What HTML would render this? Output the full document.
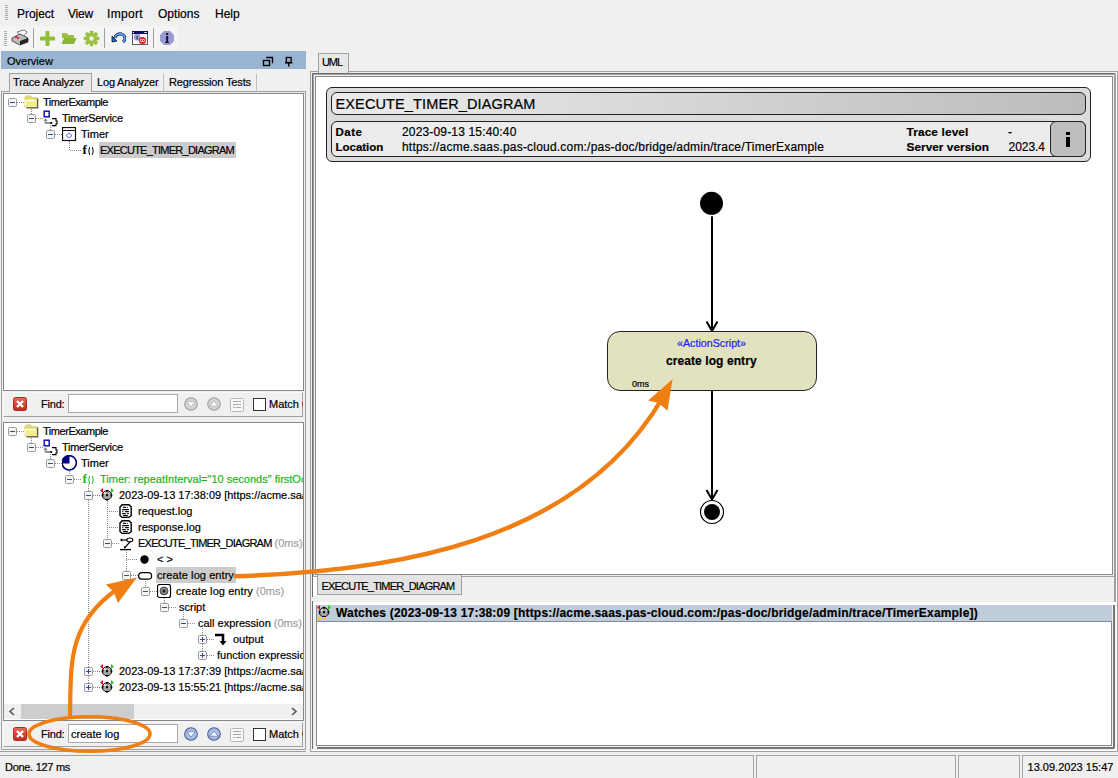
<!DOCTYPE html>
<html><head><meta charset="utf-8"><style>
html,body{margin:0;padding:0;}
body{width:1118px;height:778px;overflow:hidden;position:relative;background:#f0f0f0;font-family:"Liberation Sans",sans-serif;}
body div{position:absolute;box-sizing:border-box;}
.t{white-space:nowrap;-webkit-text-stroke:0.2px currentColor;}
#L{position:absolute;left:0;top:0;width:1118px;height:778px;}
#clipL{position:absolute;left:0;top:0;width:303px;height:778px;overflow:hidden;}
</style></head><body>
<div style="left:0px;top:0px;width:1118px;height:26px;background:#f0f0f0"></div><div style="left:5px;top:5px;width:3px;height:1px;background:#a8a8a8"></div><div style="left:5px;top:7px;width:3px;height:1px;background:#a8a8a8"></div><div style="left:5px;top:9px;width:3px;height:1px;background:#a8a8a8"></div><div style="left:5px;top:11px;width:3px;height:1px;background:#a8a8a8"></div><div style="left:5px;top:13px;width:3px;height:1px;background:#a8a8a8"></div><div style="left:5px;top:15px;width:3px;height:1px;background:#a8a8a8"></div><div style="left:5px;top:17px;width:3px;height:1px;background:#a8a8a8"></div><div style="left:5px;top:19px;width:3px;height:1px;background:#a8a8a8"></div><div class="t" style="left:17px;top:7.84px;font-size:12px;line-height:12px;color:#000;letter-spacing:-0.049px;">Project</div><div class="t" style="left:68px;top:7.84px;font-size:12px;line-height:12px;color:#000;letter-spacing:-0.199px;">View</div><div class="t" style="left:107px;top:7.84px;font-size:12px;line-height:12px;color:#000;letter-spacing:0.333px;">Import</div><div class="t" style="left:158px;top:7.84px;font-size:12px;line-height:12px;color:#000;letter-spacing:0.022px;">Options</div><div class="t" style="left:215px;top:7.84px;font-size:12px;line-height:12px;color:#000;letter-spacing:-0.022px;">Help</div><div style="left:0px;top:26px;width:178px;height:24px;background:#f4f4f4"></div><div style="left:4px;top:31px;width:3px;height:1px;background:#a8a8a8"></div><div style="left:4px;top:33px;width:3px;height:1px;background:#a8a8a8"></div><div style="left:4px;top:35px;width:3px;height:1px;background:#a8a8a8"></div><div style="left:4px;top:37px;width:3px;height:1px;background:#a8a8a8"></div><div style="left:4px;top:39px;width:3px;height:1px;background:#a8a8a8"></div><div style="left:4px;top:41px;width:3px;height:1px;background:#a8a8a8"></div><div style="left:4px;top:43px;width:3px;height:1px;background:#a8a8a8"></div><div style="left:4px;top:45px;width:3px;height:1px;background:#a8a8a8"></div><div style="left:33px;top:28px;width:1px;height:20px;background:#a0a0a0"></div><div style="left:104px;top:28px;width:1px;height:20px;background:#a0a0a0"></div><div style="left:153px;top:28px;width:1px;height:20px;background:#a0a0a0"></div><svg style="position:absolute;left:11px;top:29px" width="18" height="17" viewBox="0 0 18 17"><path d="M6 3 L13 1 L16 3 L12 8 Z" fill="#fff" stroke="#777" stroke-width="1"/><path d="M1 9 L9 5 L17 9 L17 13 L9 16 L1 12 Z" fill="#bbb" stroke="#555" stroke-width="1"/><path d="M9 12 L17 9 L17 13 L9 16 Z" fill="#222"/><circle cx="5" cy="8" r="1" fill="#e00"/><circle cx="7" cy="9" r="1" fill="#e00"/></svg><svg style="position:absolute;left:40px;top:31px" width="15" height="15" viewBox="0 0 15 15"><path d="M7.5 1.5 V13.5 M1.5 7.5 H13.5" stroke="#8fbf3a" stroke-width="4" stroke-linecap="round"/></svg><svg style="position:absolute;left:61px;top:32px" width="16" height="13" viewBox="0 0 16 13"><path d="M1 1 H6 L7 3 H13 V6 H1 Z" fill="#9cc043"/><path d="M3 6 H15.5 L13 12 H0.5 Z" fill="#8ab53a"/></svg><svg style="position:absolute;left:83px;top:30px" width="17" height="17" viewBox="0 0 17 17"><g transform="translate(8.5 8.5)"><rect x="-1.8" y="-7.8" width="3.6" height="4" rx="0.8" fill="#9bc23f" transform="rotate(0)"/><rect x="-1.8" y="-7.8" width="3.6" height="4" rx="0.8" fill="#9bc23f" transform="rotate(45)"/><rect x="-1.8" y="-7.8" width="3.6" height="4" rx="0.8" fill="#9bc23f" transform="rotate(90)"/><rect x="-1.8" y="-7.8" width="3.6" height="4" rx="0.8" fill="#9bc23f" transform="rotate(135)"/><rect x="-1.8" y="-7.8" width="3.6" height="4" rx="0.8" fill="#9bc23f" transform="rotate(180)"/><rect x="-1.8" y="-7.8" width="3.6" height="4" rx="0.8" fill="#9bc23f" transform="rotate(225)"/><rect x="-1.8" y="-7.8" width="3.6" height="4" rx="0.8" fill="#9bc23f" transform="rotate(270)"/><rect x="-1.8" y="-7.8" width="3.6" height="4" rx="0.8" fill="#9bc23f" transform="rotate(315)"/><circle r="5.6" fill="#9bc23f"/><circle r="2.2" fill="#f4f4f4"/></g></svg><svg style="position:absolute;left:111px;top:32px" width="15" height="12" viewBox="0 0 15 12"><path d="M4 6 A5 4.5 0 1 1 12 10" fill="none" stroke="#1a1a6a" stroke-width="3"/><path d="M4 6 A5 4.5 0 1 1 12 10" fill="none" stroke="#5ab0f0" stroke-width="1.5"/><path d="M1 4 L6 9 L1 10 Z" fill="#1a6ad0" stroke="#111" stroke-width="0.8"/></svg><svg style="position:absolute;left:132px;top:31px" width="16" height="14" viewBox="0 0 16 14"><rect x="0.5" y="0.5" width="15" height="13" fill="#fff" stroke="#5a5a5a"/><rect x="0" y="0" width="16" height="3" fill="#0a0a60"/><rect x="1" y="1" width="1" height="1" fill="#fff"/><rect x="12" y="1" width="3" height="1" fill="#ccc"/><circle cx="5.2" cy="6.2" r="3.4" fill="#9aa0d0"/><rect x="4.6" y="5" width="1.3" height="3.5" fill="#333a70"/><circle cx="10.5" cy="9.5" r="3.6" fill="#f01010"/><path d="M8.3 9.5 a1 1 0 1 0 2.2 0 a1 1 0 1 1 2.2 0 a1 1 0 1 1 -2.2 0 a1 1 0 1 0 -2.2 0" fill="none" stroke="#fff" stroke-width="0.9"/></svg><svg style="position:absolute;left:159px;top:30px" width="16" height="16" viewBox="0 0 16 16"><path d="M5 1 H11 L15 5 V11 L11 15 H5 L1 11 V5 Z" fill="#9b9bd0"/><rect x="7" y="6" width="2.2" height="6" fill="#1a1a40"/><rect x="7" y="3" width="2.2" height="2" fill="#1a1a40"/><rect x="6" y="12" width="4" height="1" fill="#1a1a40"/></svg><div style="left:1px;top:51px;width:305px;height:18px;background:#99b4d1"></div><div class="t" style="left:7px;top:55.69px;font-size:11px;line-height:11px;color:#000;">Overview</div><svg style="position:absolute;left:262px;top:56px" width="12" height="12" viewBox="0 0 12 12"><rect x="1.5" y="4.5" width="6" height="5" fill="none" stroke="#000" stroke-width="1.4"/><path d="M4.2 1.5 H10.5 V7.2" fill="none" stroke="#000" stroke-width="1.4"/></svg><svg style="position:absolute;left:284px;top:56px" width="10" height="11" viewBox="0 0 10 11"><rect x="2.3" y="1.5" width="4.8" height="5" fill="none" stroke="#000" stroke-width="1.3"/><path d="M1 6.8 H8.5" stroke="#000" stroke-width="1.4"/><path d="M4.7 7 V10.5" stroke="#000" stroke-width="1.4"/></svg><div style="left:1px;top:91px;width:305px;height:659px;border:1px solid #a0a0a0;background:#f0f0f0"></div><div style="left:9px;top:73px;width:83px;height:19px;background:#e8e8e8;border:1px solid #a0a0a0;border-bottom:none"></div><div class="t" style="left:13px;top:76.69px;font-size:11px;line-height:11px;color:#000;letter-spacing:-0.142px;">Trace Analyzer</div><div class="t" style="left:97px;top:76.69px;font-size:11px;line-height:11px;color:#000;letter-spacing:-0.178px;">Log Analyzer</div><div style="left:163px;top:74px;width:1px;height:17px;background:#c0c0c0"></div><div class="t" style="left:169px;top:76.69px;font-size:11px;line-height:11px;color:#000;letter-spacing:-0.138px;">Regression Tests</div><div style="left:256px;top:74px;width:1px;height:17px;background:#c0c0c0"></div><div style="left:3px;top:93px;width:301px;height:298px;background:#fff;border:1px solid #828790"></div><div style="left:3px;top:392px;width:300px;height:25px;background:#f0f0f0;border:1px solid #a0a0a0;border-top-color:#f8f8f8;border-left-color:#f8f8f8"></div><svg style="position:absolute;left:13px;top:397px" width="14" height="14" viewBox="0 0 14 14"><defs><linearGradient id="rg" x1="0" y1="0" x2="0" y2="1"><stop offset="0" stop-color="#e86a5c"/><stop offset="1" stop-color="#c0281c"/></linearGradient></defs><rect x="0.5" y="0.5" width="13" height="13" rx="2" fill="url(#rg)" stroke="#b52a20"/><path d="M4 4 L10 10 M10 4 L4 10" stroke="#fff" stroke-width="2.4"/></svg><div class="t" style="left:41px;top:398.69px;font-size:11px;line-height:11px;color:#000;letter-spacing:-0.194px;">Find:</div><div style="left:68px;top:394px;width:110px;height:19px;background:#fff;border:1px solid #aaa;box-sizing:border-box"></div><svg style="position:absolute;left:184px;top:397px" width="14" height="14" viewBox="0 0 14 14"><circle cx="7" cy="7" r="6.3" fill="#d4d4d4" stroke="#a0a0a0" stroke-width="1.1"/><path d="M3 4.8 H11 L7 10 Z" fill="#fff" stroke="#a0a0a0" stroke-width="0.6"/></svg><svg style="position:absolute;left:207px;top:397px" width="14" height="14" viewBox="0 0 14 14"><circle cx="7" cy="7" r="6.3" fill="#d4d4d4" stroke="#a0a0a0" stroke-width="1.1"/><path d="M3 9.2 H11 L7 4 Z" fill="#fff" stroke="#a0a0a0" stroke-width="0.6"/></svg><svg style="position:absolute;left:230px;top:398px" width="14" height="14" viewBox="0 0 14 14"><rect x="0.5" y="0.5" width="13" height="13" rx="1" fill="#f8f8f8" stroke="#b8b8b8"/><path d="M3 3.5 H11 M3 6.5 H11 M3 9.5 H5 M6 9.5 H11" stroke="#a8a8a8"/></svg><div style="left:253px;top:398px;width:13px;height:13px;background:#fff;border:1px solid #333;box-sizing:border-box"></div><div class="t" style="left:269px;top:398.69px;font-size:11px;line-height:11px;color:#000;clip-path:inset(0 0 0 0);width:34px;overflow:hidden">Match Case</div><div style="left:3px;top:422px;width:301px;height:299px;background:#fff;border:1px solid #828790"></div><div style="left:3px;top:722px;width:300px;height:25px;background:#f0f0f0;border:1px solid #a0a0a0;border-top-color:#f8f8f8;border-left-color:#f8f8f8"></div><svg style="position:absolute;left:13px;top:727px" width="14" height="14" viewBox="0 0 14 14"><defs><linearGradient id="rg" x1="0" y1="0" x2="0" y2="1"><stop offset="0" stop-color="#e86a5c"/><stop offset="1" stop-color="#c0281c"/></linearGradient></defs><rect x="0.5" y="0.5" width="13" height="13" rx="2" fill="url(#rg)" stroke="#b52a20"/><path d="M4 4 L10 10 M10 4 L4 10" stroke="#fff" stroke-width="2.4"/></svg><div class="t" style="left:41px;top:728.69px;font-size:11px;line-height:11px;color:#000;letter-spacing:-0.194px;">Find:</div><div style="left:68px;top:724px;width:110px;height:19px;background:#fff;border:1px solid #aaa;box-sizing:border-box"></div><div class="t" style="left:71px;top:728.69px;font-size:11px;line-height:11px;color:#000;">create log</div><svg style="position:absolute;left:184px;top:727px" width="14" height="14" viewBox="0 0 14 14"><circle cx="7" cy="7" r="6.3" fill="#aabde6" stroke="#4a5f90" stroke-width="1.1"/><path d="M3 4.8 H11 L7 10 Z" fill="#fff" stroke="#4a5f90" stroke-width="0.6"/></svg><svg style="position:absolute;left:207px;top:727px" width="14" height="14" viewBox="0 0 14 14"><circle cx="7" cy="7" r="6.3" fill="#aabde6" stroke="#4a5f90" stroke-width="1.1"/><path d="M3 9.2 H11 L7 4 Z" fill="#fff" stroke="#4a5f90" stroke-width="0.6"/></svg><svg style="position:absolute;left:230px;top:728px" width="14" height="14" viewBox="0 0 14 14"><rect x="0.5" y="0.5" width="13" height="13" rx="1" fill="#f8f8f8" stroke="#b8b8b8"/><path d="M3 3.5 H11 M3 6.5 H11 M3 9.5 H5 M6 9.5 H11" stroke="#a8a8a8"/></svg><div style="left:253px;top:728px;width:13px;height:13px;background:#fff;border:1px solid #333;box-sizing:border-box"></div><div class="t" style="left:269px;top:728.69px;font-size:11px;line-height:11px;color:#000;clip-path:inset(0 0 0 0);width:34px;overflow:hidden">Match Case</div><div style="left:4px;top:704px;width:299px;height:15px;background:#f0f0f0"></div><div style="left:21px;top:704px;width:113px;height:15px;background:#cdcdcd"></div><svg style="position:absolute;left:8px;top:707px" width="8" height="9" viewBox="0 0 8 9"><path d="M6 1 L2 4.5 L6 8" fill="none" stroke="#555" stroke-width="1.6"/></svg><svg style="position:absolute;left:290px;top:707px" width="8" height="9" viewBox="0 0 8 9"><path d="M2 1 L6 4.5 L2 8" fill="none" stroke="#555" stroke-width="1.6"/></svg><div style="left:0px;top:751px;width:306px;height:1px;background:#a0a0a0"></div><div style="left:0;top:0;width:1118px;height:778px;clip-path:inset(94px 815px 58px 4px)"><div style="left:17px;top:102px;width:7px;height:1px;background:repeating-linear-gradient(90deg,#8a8a8a 0 1px,transparent 1px 2px)"></div><div style="left:31px;top:107px;width:1px;height:11px;background:repeating-linear-gradient(180deg,#8a8a8a 0 1px,transparent 1px 2px)"></div><div style="left:36px;top:118px;width:7px;height:1px;background:repeating-linear-gradient(90deg,#8a8a8a 0 1px,transparent 1px 2px)"></div><div style="left:50px;top:123px;width:1px;height:11px;background:repeating-linear-gradient(180deg,#8a8a8a 0 1px,transparent 1px 2px)"></div><div style="left:55px;top:134px;width:7px;height:1px;background:repeating-linear-gradient(90deg,#8a8a8a 0 1px,transparent 1px 2px)"></div><div style="left:69px;top:139px;width:1px;height:11px;background:repeating-linear-gradient(180deg,#8a8a8a 0 1px,transparent 1px 2px)"></div><div style="left:70px;top:150px;width:11px;height:1px;background:repeating-linear-gradient(90deg,#8a8a8a 0 1px,transparent 1px 2px)"></div><svg style="position:absolute;left:8px;top:98px" width="9" height="9" viewBox="0 0 9 9"><rect x="0.5" y="0.5" width="8" height="8" rx="1" fill="#f4f4f4" stroke="#9a9a9a"/><path d="M2 4.5 H7" stroke="#3050a0"/></svg><svg style="position:absolute;left:24px;top:95px" width="15" height="15" viewBox="0 0 15 15"><path d="M13.6 3.2 V12.8 H2.5" fill="none" stroke="#5a5a50" stroke-width="1.4"/><path d="M0.8 2.6 L2.4 0.8 H6.6 L8.2 2.6 H12.6 V12 H0.8 Z" fill="#e4dc6c" stroke="#c8c050" stroke-width="0.5"/><path d="M0.6 5 H12.4 L12.8 12 H1.4 Z" fill="#f2ec8c"/><path d="M1.2 5.4 H11.6" stroke="#fff" stroke-width="1.3"/><path d="M1.2 5.4 V11" stroke="#fff" stroke-width="1"/></svg><div class="t" style="left:43px;top:96.69px;font-size:11px;line-height:11px;color:#000;letter-spacing:-0.458px;">TimerExample</div><svg style="position:absolute;left:27px;top:114px" width="9" height="9" viewBox="0 0 9 9"><rect x="0.5" y="0.5" width="8" height="8" rx="1" fill="#f4f4f4" stroke="#9a9a9a"/><path d="M2 4.5 H7" stroke="#3050a0"/></svg><svg style="position:absolute;left:43px;top:110px" width="17" height="17" viewBox="0 0 17 17"><rect x="1.2" y="1.2" width="5" height="5.6" fill="none" stroke="#0000c0" stroke-width="1.4"/><path d="M2.5 13.5 V10" stroke="#8a8a8a" stroke-width="1.7"/><path d="M0.2 10.8 L2.5 8.2 L4.8 10.8 Z" fill="#8a8a8a"/><path d="M2.5 13 H8" stroke="#8a8a8a" stroke-width="1.8"/><circle cx="8.3" cy="13" r="1.1" fill="#000"/><path d="M9 8.6 H13 V11 H14 V13.8 H13 V15.6 H9" fill="none" stroke="#000" stroke-width="1.1"/></svg><div class="t" style="left:62px;top:112.69px;font-size:11px;line-height:11px;color:#000;letter-spacing:-0.306px;">TimerService</div><svg style="position:absolute;left:46px;top:130px" width="9" height="9" viewBox="0 0 9 9"><rect x="0.5" y="0.5" width="8" height="8" rx="1" fill="#f4f4f4" stroke="#9a9a9a"/><path d="M2 4.5 H7" stroke="#3050a0"/></svg><svg style="position:absolute;left:62px;top:127px" width="15" height="15" viewBox="0 0 15 15"><rect x="0.5" y="0.5" width="13" height="13" fill="#fff" stroke="#111" stroke-width="1.2"/><path d="M1 3.5 H13" stroke="#111"/><path d="M7 6 L10 8.5 L7 11 L4 8.5 Z" fill="none" stroke="#4a4af0" stroke-width="0.9"/></svg><div class="t" style="left:81px;top:128.69px;font-size:11px;line-height:11px;color:#000;">Timer</div><svg style="position:absolute;left:81px;top:143px" width="15" height="15" viewBox="0 0 15 15"><text x="1.6" y="11" font-family="Liberation Serif" font-weight="bold" font-size="13" fill="#000">f</text><path d="M8.6 4.2 Q7 8 8.6 11.8 M11.4 4.2 Q13 8 11.4 11.8" fill="none" stroke="#000" stroke-width="1"/></svg><div style="left:99px;top:142px;width:137px;height:16px;background:#cccccc"></div><div class="t" style="left:100px;top:144.69px;font-size:11px;line-height:11px;color:#000;letter-spacing:-0.751px;">EXECUTE_TIMER_DIAGRAM</div><div style="left:17px;top:431px;width:7px;height:1px;background:repeating-linear-gradient(90deg,#8a8a8a 0 1px,transparent 1px 2px)"></div><div style="left:31px;top:436px;width:1px;height:11px;background:repeating-linear-gradient(180deg,#8a8a8a 0 1px,transparent 1px 2px)"></div><div style="left:36px;top:447px;width:7px;height:1px;background:repeating-linear-gradient(90deg,#8a8a8a 0 1px,transparent 1px 2px)"></div><div style="left:50px;top:452px;width:1px;height:11px;background:repeating-linear-gradient(180deg,#8a8a8a 0 1px,transparent 1px 2px)"></div><div style="left:55px;top:463px;width:7px;height:1px;background:repeating-linear-gradient(90deg,#8a8a8a 0 1px,transparent 1px 2px)"></div><div style="left:69px;top:469px;width:1px;height:10px;background:repeating-linear-gradient(180deg,#8a8a8a 0 1px,transparent 1px 2px)"></div><div style="left:74px;top:479px;width:7px;height:1px;background:repeating-linear-gradient(90deg,#8a8a8a 0 1px,transparent 1px 2px)"></div><div style="left:88px;top:484px;width:1px;height:203px;background:repeating-linear-gradient(180deg,#8a8a8a 0 1px,transparent 1px 2px)"></div><div style="left:93px;top:495px;width:7px;height:1px;background:repeating-linear-gradient(90deg,#8a8a8a 0 1px,transparent 1px 2px)"></div><div style="left:93px;top:671px;width:7px;height:1px;background:repeating-linear-gradient(90deg,#8a8a8a 0 1px,transparent 1px 2px)"></div><div style="left:93px;top:687px;width:7px;height:1px;background:repeating-linear-gradient(90deg,#8a8a8a 0 1px,transparent 1px 2px)"></div><div style="left:107px;top:501px;width:1px;height:42px;background:repeating-linear-gradient(180deg,#8a8a8a 0 1px,transparent 1px 2px)"></div><div style="left:107px;top:511px;width:12px;height:1px;background:repeating-linear-gradient(90deg,#8a8a8a 0 1px,transparent 1px 2px)"></div><div style="left:107px;top:527px;width:12px;height:1px;background:repeating-linear-gradient(90deg,#8a8a8a 0 1px,transparent 1px 2px)"></div><div style="left:112px;top:543px;width:7px;height:1px;background:repeating-linear-gradient(90deg,#8a8a8a 0 1px,transparent 1px 2px)"></div><div style="left:126px;top:550px;width:1px;height:25px;background:repeating-linear-gradient(180deg,#8a8a8a 0 1px,transparent 1px 2px)"></div><div style="left:126px;top:559px;width:12px;height:1px;background:repeating-linear-gradient(90deg,#8a8a8a 0 1px,transparent 1px 2px)"></div><div style="left:131px;top:575px;width:7px;height:1px;background:repeating-linear-gradient(90deg,#8a8a8a 0 1px,transparent 1px 2px)"></div><div style="left:145px;top:579px;width:1px;height:12px;background:repeating-linear-gradient(180deg,#8a8a8a 0 1px,transparent 1px 2px)"></div><div style="left:150px;top:591px;width:7px;height:1px;background:repeating-linear-gradient(90deg,#8a8a8a 0 1px,transparent 1px 2px)"></div><div style="left:164px;top:598px;width:1px;height:9px;background:repeating-linear-gradient(180deg,#8a8a8a 0 1px,transparent 1px 2px)"></div><div style="left:169px;top:607px;width:7px;height:1px;background:repeating-linear-gradient(90deg,#8a8a8a 0 1px,transparent 1px 2px)"></div><div style="left:183px;top:612px;width:1px;height:11px;background:repeating-linear-gradient(180deg,#8a8a8a 0 1px,transparent 1px 2px)"></div><div style="left:188px;top:623px;width:7px;height:1px;background:repeating-linear-gradient(90deg,#8a8a8a 0 1px,transparent 1px 2px)"></div><div style="left:202px;top:628px;width:1px;height:27px;background:repeating-linear-gradient(180deg,#8a8a8a 0 1px,transparent 1px 2px)"></div><div style="left:207px;top:639px;width:7px;height:1px;background:repeating-linear-gradient(90deg,#8a8a8a 0 1px,transparent 1px 2px)"></div><div style="left:207px;top:655px;width:7px;height:1px;background:repeating-linear-gradient(90deg,#8a8a8a 0 1px,transparent 1px 2px)"></div><svg style="position:absolute;left:8px;top:427px" width="9" height="9" viewBox="0 0 9 9"><rect x="0.5" y="0.5" width="8" height="8" rx="1" fill="#f4f4f4" stroke="#9a9a9a"/><path d="M2 4.5 H7" stroke="#3050a0"/></svg><svg style="position:absolute;left:24px;top:424px" width="15" height="15" viewBox="0 0 15 15"><path d="M13.6 3.2 V12.8 H2.5" fill="none" stroke="#5a5a50" stroke-width="1.4"/><path d="M0.8 2.6 L2.4 0.8 H6.6 L8.2 2.6 H12.6 V12 H0.8 Z" fill="#e4dc6c" stroke="#c8c050" stroke-width="0.5"/><path d="M0.6 5 H12.4 L12.8 12 H1.4 Z" fill="#f2ec8c"/><path d="M1.2 5.4 H11.6" stroke="#fff" stroke-width="1.3"/><path d="M1.2 5.4 V11" stroke="#fff" stroke-width="1"/></svg><div class="t" style="left:43px;top:425.69px;font-size:11px;line-height:11px;color:#000;letter-spacing:-0.458px;">TimerExample</div><svg style="position:absolute;left:27px;top:443px" width="9" height="9" viewBox="0 0 9 9"><rect x="0.5" y="0.5" width="8" height="8" rx="1" fill="#f4f4f4" stroke="#9a9a9a"/><path d="M2 4.5 H7" stroke="#3050a0"/></svg><svg style="position:absolute;left:43px;top:439px" width="17" height="17" viewBox="0 0 17 17"><rect x="1.2" y="1.2" width="5" height="5.6" fill="none" stroke="#0000c0" stroke-width="1.4"/><path d="M2.5 13.5 V10" stroke="#8a8a8a" stroke-width="1.7"/><path d="M0.2 10.8 L2.5 8.2 L4.8 10.8 Z" fill="#8a8a8a"/><path d="M2.5 13 H8" stroke="#8a8a8a" stroke-width="1.8"/><circle cx="8.3" cy="13" r="1.1" fill="#000"/><path d="M9 8.6 H13 V11 H14 V13.8 H13 V15.6 H9" fill="none" stroke="#000" stroke-width="1.1"/></svg><div class="t" style="left:62px;top:441.69px;font-size:11px;line-height:11px;color:#000;letter-spacing:-0.306px;">TimerService</div><svg style="position:absolute;left:46px;top:459px" width="9" height="9" viewBox="0 0 9 9"><rect x="0.5" y="0.5" width="8" height="8" rx="1" fill="#f4f4f4" stroke="#9a9a9a"/><path d="M2 4.5 H7" stroke="#3050a0"/></svg><svg style="position:absolute;left:62px;top:455px" width="17" height="17" viewBox="0 0 17 17"><circle cx="7.2" cy="7.8" r="7.2" fill="#fff" stroke="#000080" stroke-width="1.6"/><path d="M7.5 8.5 V0.8 A7 7 0 0 0 0.3 8.5 Z" fill="#000080"/></svg><div class="t" style="left:81px;top:457.69px;font-size:11px;line-height:11px;color:#000;">Timer</div><svg style="position:absolute;left:65px;top:475px" width="9" height="9" viewBox="0 0 9 9"><rect x="0.5" y="0.5" width="8" height="8" rx="1" fill="#f4f4f4" stroke="#9a9a9a"/><path d="M2 4.5 H7" stroke="#3050a0"/></svg><svg style="position:absolute;left:81px;top:472px" width="15" height="15" viewBox="0 0 15 15"><text x="1.6" y="11" font-family="Liberation Serif" font-weight="bold" font-size="13" fill="#22b422">f</text><path d="M8.6 4.2 Q7 8 8.6 11.8 M11.4 4.2 Q13 8 11.4 11.8" fill="none" stroke="#22b422" stroke-width="1"/></svg><div class="t" style="left:100px;top:473.69px;font-size:11px;line-height:11px;color:#22b422;">Timer: repeatInterval="10 seconds" firstOccurrence</div><svg style="position:absolute;left:84px;top:491px" width="9" height="9" viewBox="0 0 9 9"><rect x="0.5" y="0.5" width="8" height="8" rx="1" fill="#f4f4f4" stroke="#9a9a9a"/><path d="M2 4.5 H7" stroke="#3050a0"/></svg><svg style="position:absolute;left:100px;top:488px" width="15" height="15" viewBox="0 0 15 15"><g transform="translate(7 7.2)"><path d="M-2 -4.3 H2 L4.3 -2 V2 L2 4.3 H-2 L-4.3 2 V-2 Z" fill="#a8a8a8" stroke="#000" stroke-width="1"/><rect x="-1" y="-5.3" width="2" height="1.6" fill="#000"/><rect x="-1" y="3.7" width="2" height="1.6" fill="#000"/><rect x="-5.3" y="-1" width="1.6" height="2" fill="#000"/><rect x="3.7" y="-1" width="1.6" height="2" fill="#000"/><rect x="-1" y="-1" width="2" height="2" fill="#000"/><rect x="-3" y="-3" width="1.5" height="1.5" fill="#fff"/></g><path d="M0 2.5 L3 0 L3 5 Z" fill="#e01010"/><path d="M14 2.5 L11 0 L11 5 Z" fill="#10d010"/></svg><div class="t" style="left:119px;top:489.69px;font-size:11px;line-height:11px;color:#000;">2023-09-13 17:38:09 [https://acme.saas.pas-cloud.com</div><svg style="position:absolute;left:119px;top:504px" width="15" height="15" viewBox="0 0 15 15"><path d="M3 0.8 H10 L12.2 3 V11.5 L10 13.4 H3 L1 11.5 V3 Z" fill="#fff" stroke="#000" stroke-width="1.4"/><rect x="4" y="2.8" width="3" height="1.3" rx="0.6" fill="#000"/><rect x="8" y="2.8" width="1" height="1.3" rx="0.6" fill="#000"/><rect x="3" y="4.9" width="7" height="1.3" rx="0.6" fill="#000"/><rect x="3" y="6.9" width="1.5" height="1.3" rx="0.6" fill="#000"/><rect x="6" y="6.9" width="4" height="1.3" rx="0.6" fill="#000"/><rect x="3" y="8.9" width="4" height="1.3" rx="0.6" fill="#000"/><rect x="8" y="8.9" width="2" height="1.3" rx="0.6" fill="#000"/><rect x="4" y="10.9" width="5" height="1.3" rx="0.6" fill="#000"/></svg><div class="t" style="left:138px;top:505.69px;font-size:11px;line-height:11px;color:#000;">request.log</div><svg style="position:absolute;left:119px;top:520px" width="15" height="15" viewBox="0 0 15 15"><path d="M3 0.8 H10 L12.2 3 V11.5 L10 13.4 H3 L1 11.5 V3 Z" fill="#fff" stroke="#000" stroke-width="1.4"/><rect x="4" y="2.8" width="3" height="1.3" rx="0.6" fill="#000"/><rect x="8" y="2.8" width="1" height="1.3" rx="0.6" fill="#000"/><rect x="3" y="4.9" width="7" height="1.3" rx="0.6" fill="#000"/><rect x="3" y="6.9" width="1.5" height="1.3" rx="0.6" fill="#000"/><rect x="6" y="6.9" width="4" height="1.3" rx="0.6" fill="#000"/><rect x="3" y="8.9" width="4" height="1.3" rx="0.6" fill="#000"/><rect x="8" y="8.9" width="2" height="1.3" rx="0.6" fill="#000"/><rect x="4" y="10.9" width="5" height="1.3" rx="0.6" fill="#000"/></svg><div class="t" style="left:138px;top:521.69px;font-size:11px;line-height:11px;color:#000;">response.log</div><svg style="position:absolute;left:103px;top:539px" width="9" height="9" viewBox="0 0 9 9"><rect x="0.5" y="0.5" width="8" height="8" rx="1" fill="#f4f4f4" stroke="#9a9a9a"/><path d="M2 4.5 H7" stroke="#3050a0"/></svg><svg style="position:absolute;left:119px;top:536px" width="15" height="15" viewBox="0 0 15 15"><path d="M1 13.6 H12" stroke="#000" stroke-width="1.3"/><path d="M2.5 4 H8" stroke="#000" stroke-width="1.2"/><path d="M0.8 4 L3.2 2.2 V5.8 Z" fill="#000"/><ellipse cx="10.8" cy="3.9" rx="3" ry="1.9" fill="none" stroke="#000" stroke-width="1.1"/><path d="M11 5.8 L5.5 12" stroke="#000" stroke-width="1.2"/><path d="M4.8 12.6 L5.2 10 L7 11.2 Z" fill="#000"/></svg><div class="t" style="left:138px;top:537.69px;font-size:11px;line-height:11px;color:#000;letter-spacing:-0.771px;">EXECUTE_TIMER_DIAGRAM</div><div class="t" style="left:274.6px;top:537.69px;font-size:11px;line-height:11px;color:#a0a0a0;">(0ms)</div><svg style="position:absolute;left:138px;top:552px" width="15" height="15" viewBox="0 0 15 15"><circle cx="6.5" cy="7.5" r="4.2" fill="#000"/></svg><div class="t" style="left:157px;top:553.69px;font-size:11px;line-height:11px;color:#000;">&lt; &gt;</div><svg style="position:absolute;left:122px;top:571px" width="9" height="9" viewBox="0 0 9 9"><rect x="0.5" y="0.5" width="8" height="8" rx="1" fill="#f4f4f4" stroke="#9a9a9a"/><path d="M2 4.5 H7" stroke="#3050a0"/></svg><svg style="position:absolute;left:138px;top:568px" width="15" height="15" viewBox="0 0 15 15"><rect x="0.6" y="4.6" width="13" height="6.5" rx="3.2" fill="#fff" stroke="#000" stroke-width="1.2"/></svg><div style="left:156px;top:567px;width:80px;height:16px;background:#cccccc"></div><div class="t" style="left:157px;top:569.69px;font-size:11px;line-height:11px;color:#000;letter-spacing:0.070px;">create log entry</div><svg style="position:absolute;left:141px;top:587px" width="9" height="9" viewBox="0 0 9 9"><rect x="0.5" y="0.5" width="8" height="8" rx="1" fill="#f4f4f4" stroke="#9a9a9a"/><path d="M2 4.5 H7" stroke="#3050a0"/></svg><svg style="position:absolute;left:157px;top:584px" width="15" height="15" viewBox="0 0 15 15"><rect x="0.5" y="0.5" width="13" height="13" rx="2" fill="#fff" stroke="#000" stroke-width="1.2"/><g transform="translate(7 7)"><circle r="4" fill="#888" stroke="#333" stroke-width="0.8"/><circle r="1.5" fill="#222"/></g></svg><div class="t" style="left:176px;top:585.69px;font-size:11px;line-height:11px;color:#000;letter-spacing:0.070px;">create log entry</div><div class="t" style="left:256px;top:585.69px;font-size:11px;line-height:11px;color:#a0a0a0;">(0ms)</div><svg style="position:absolute;left:160px;top:603px" width="9" height="9" viewBox="0 0 9 9"><rect x="0.5" y="0.5" width="8" height="8" rx="1" fill="#f4f4f4" stroke="#9a9a9a"/><path d="M2 4.5 H7" stroke="#3050a0"/></svg><div class="t" style="left:179px;top:601.69px;font-size:11px;line-height:11px;color:#000;">script</div><svg style="position:absolute;left:179px;top:619px" width="9" height="9" viewBox="0 0 9 9"><rect x="0.5" y="0.5" width="8" height="8" rx="1" fill="#f4f4f4" stroke="#9a9a9a"/><path d="M2 4.5 H7" stroke="#3050a0"/></svg><div class="t" style="left:198px;top:617.69px;font-size:11px;line-height:11px;color:#000;">call expression</div><div class="t" style="left:273.78125px;top:617.69px;font-size:11px;line-height:11px;color:#a0a0a0;">(0ms)</div><svg style="position:absolute;left:198px;top:635px" width="9" height="9" viewBox="0 0 9 9"><rect x="0.5" y="0.5" width="8" height="8" rx="1" fill="#f4f4f4" stroke="#9a9a9a"/><path d="M2 4.5 H7" stroke="#3050a0"/><path d="M4.5 2 V7" stroke="#3050a0"/></svg><svg style="position:absolute;left:214px;top:632px" width="15" height="15" viewBox="0 0 15 15"><path d="M1 3 H9 V10" fill="none" stroke="#000" stroke-width="2.6"/><path d="M5.5 9 H12.5 L9 13.5 Z" fill="#000"/></svg><div class="t" style="left:233px;top:633.69px;font-size:11px;line-height:11px;color:#000;">output</div><svg style="position:absolute;left:198px;top:651px" width="9" height="9" viewBox="0 0 9 9"><rect x="0.5" y="0.5" width="8" height="8" rx="1" fill="#f4f4f4" stroke="#9a9a9a"/><path d="M2 4.5 H7" stroke="#3050a0"/><path d="M4.5 2 V7" stroke="#3050a0"/></svg><div class="t" style="left:217px;top:649.69px;font-size:11px;line-height:11px;color:#000;">function expression</div><svg style="position:absolute;left:84px;top:667px" width="9" height="9" viewBox="0 0 9 9"><rect x="0.5" y="0.5" width="8" height="8" rx="1" fill="#f4f4f4" stroke="#9a9a9a"/><path d="M2 4.5 H7" stroke="#3050a0"/><path d="M4.5 2 V7" stroke="#3050a0"/></svg><svg style="position:absolute;left:100px;top:664px" width="15" height="15" viewBox="0 0 15 15"><g transform="translate(7 7.2)"><path d="M-2 -4.3 H2 L4.3 -2 V2 L2 4.3 H-2 L-4.3 2 V-2 Z" fill="#a8a8a8" stroke="#000" stroke-width="1"/><rect x="-1" y="-5.3" width="2" height="1.6" fill="#000"/><rect x="-1" y="3.7" width="2" height="1.6" fill="#000"/><rect x="-5.3" y="-1" width="1.6" height="2" fill="#000"/><rect x="3.7" y="-1" width="1.6" height="2" fill="#000"/><rect x="-1" y="-1" width="2" height="2" fill="#000"/><rect x="-3" y="-3" width="1.5" height="1.5" fill="#fff"/></g><path d="M0 2.5 L3 0 L3 5 Z" fill="#e01010"/><path d="M14 2.5 L11 0 L11 5 Z" fill="#10d010"/></svg><div class="t" style="left:119px;top:665.69px;font-size:11px;line-height:11px;color:#000;">2023-09-13 17:37:39 [https://acme.saas.pas-cloud.com</div><svg style="position:absolute;left:84px;top:683px" width="9" height="9" viewBox="0 0 9 9"><rect x="0.5" y="0.5" width="8" height="8" rx="1" fill="#f4f4f4" stroke="#9a9a9a"/><path d="M2 4.5 H7" stroke="#3050a0"/><path d="M4.5 2 V7" stroke="#3050a0"/></svg><svg style="position:absolute;left:100px;top:680px" width="15" height="15" viewBox="0 0 15 15"><g transform="translate(7 7.2)"><path d="M-2 -4.3 H2 L4.3 -2 V2 L2 4.3 H-2 L-4.3 2 V-2 Z" fill="#a8a8a8" stroke="#000" stroke-width="1"/><rect x="-1" y="-5.3" width="2" height="1.6" fill="#000"/><rect x="-1" y="3.7" width="2" height="1.6" fill="#000"/><rect x="-5.3" y="-1" width="1.6" height="2" fill="#000"/><rect x="3.7" y="-1" width="1.6" height="2" fill="#000"/><rect x="-1" y="-1" width="2" height="2" fill="#000"/><rect x="-3" y="-3" width="1.5" height="1.5" fill="#fff"/></g><path d="M0 2.5 L3 0 L3 5 Z" fill="#e01010"/><path d="M14 2.5 L11 0 L11 5 Z" fill="#10d010"/></svg><div class="t" style="left:119px;top:681.69px;font-size:11px;line-height:11px;color:#000;">2023-09-13 15:55:21 [https://acme.saas.pas-cloud.com</div></div>
<div style="left:310px;top:71px;width:808px;height:681px;border:1px solid #a0a0a0;background:#f0f0f0"></div><div style="left:311px;top:72px;width:806px;height:679px;border:1px solid #ffffff;border-left-color:#f0f0f0;border-top-color:#f0f0f0"></div><div style="left:318px;top:53px;width:31px;height:20px;background:#e8e8e8;border:1px solid #a0a0a0;border-bottom:none"></div><div class="t" style="left:322px;top:56.69px;font-size:11px;line-height:11px;color:#000;letter-spacing:-1.073px;">UML</div><div style="left:312px;top:73px;width:1px;height:524px;background:#6e6e6e"></div><div style="left:312px;top:601px;width:1px;height:148px;background:#6e6e6e"></div><div style="left:312px;top:73px;width:803px;height:1px;background:#6e6e6e"></div><div style="left:313px;top:74px;width:1px;height:502px;background:#a0a0a0"></div><div style="left:313px;top:74px;width:801px;height:1px;background:#a0a0a0"></div><div style="left:1114px;top:73px;width:2px;height:529px;background:#a0a0a0"></div><div style="left:315px;top:76px;width:798px;height:499px;background:#fff;border:1px solid #848992"></div><div style="left:326px;top:87px;width:765px;height:75px;background:#dcdcdc;border:1.5px solid #222;border-radius:6px;box-sizing:border-box"></div><div style="left:331px;top:92px;width:755px;height:23px;background:linear-gradient(90deg,#ececec,#bcbcbc);border:1.5px solid #222;border-radius:6px;box-sizing:border-box"></div><div class="t" style="left:335.5px;top:96.73px;font-size:14.5px;line-height:14.5px;color:#000;letter-spacing:0.124px;">EXECUTE_TIMER_DIAGRAM</div><div style="left:331px;top:121px;width:755px;height:36px;background:#ececec;border:1.5px solid #222;border-radius:6px;box-sizing:border-box"></div><div style="left:1050px;top:121px;width:36px;height:36px;background:#bdbdbd;border:1.5px solid #222;border-radius:6px;box-sizing:border-box"></div><div style="left:1066px;top:132px;width:4px;height:3px;background:#000"></div><div style="left:1066px;top:137px;width:4px;height:10px;background:#000"></div><div class="t" style="left:335.5px;top:127.07px;font-size:11.5px;line-height:11.5px;color:#000;font-weight:bold;letter-spacing:0.520px;">Date</div><div class="t" style="left:335.5px;top:142.07px;font-size:11.5px;line-height:11.5px;color:#000;font-weight:bold;letter-spacing:-0.015px;">Location</div><div class="t" style="left:402px;top:126.44px;font-size:12px;line-height:12px;color:#000;letter-spacing:0.164px;">2023-09-13 15:40:40</div><div class="t" style="left:402px;top:141.44px;font-size:12px;line-height:12px;color:#000;letter-spacing:0.199px;">https://acme.saas.pas-cloud.com:/pas-doc/bridge/admin/trace/TimerExample</div><div class="t" style="left:906.5px;top:126.81px;font-size:11.8px;line-height:11.8px;color:#000;font-weight:bold;letter-spacing:0.149px;">Trace level</div><div class="t" style="left:906.5px;top:141.81px;font-size:11.8px;line-height:11.8px;color:#000;font-weight:bold;letter-spacing:0.043px;">Server version</div><div class="t" style="left:1008px;top:126.44px;font-size:12px;line-height:12px;color:#000;">-</div><div class="t" style="left:1008.5px;top:141.44px;font-size:12px;line-height:12px;color:#000;letter-spacing:-0.031px;">2023.4</div><svg style="position:absolute;left:690px;top:180px" width="45" height="350" viewBox="0 0 45 350"><circle cx="21.5" cy="23.3" r="11.5" fill="#000"/><path d="M22 36.3 V151" stroke="#000" stroke-width="2"/><path d="M16.5 141.5 L22 151 L27.5 141.5" fill="none" stroke="#000" stroke-width="2"/><path d="M22 211 V319.5" stroke="#000" stroke-width="2"/><path d="M16.5 310 L22 319.5 L27.5 310" fill="none" stroke="#000" stroke-width="2"/><circle cx="22" cy="332" r="11.5" fill="#fff" stroke="#000" stroke-width="1.2"/><circle cx="22" cy="332" r="8" fill="#000"/></svg><div style="left:607px;top:331px;width:210px;height:60px;background:#e3e2bf;border:1.5px solid #222;border-radius:13px;box-sizing:border-box"></div><div class="t" style="left:677px;top:337.94px;font-size:10.7px;line-height:10.7px;color:#2020f0;letter-spacing:0.009px;">«ActionScript»</div><div class="t" style="left:666px;top:354.84px;font-size:12px;line-height:12px;color:#000;font-weight:bold;letter-spacing:0.079px;">create log entry</div><div class="t" style="left:632px;top:380.38px;font-size:9px;line-height:9px;color:#000;letter-spacing:0.000px;">0ms</div><div style="left:313px;top:576px;width:801px;height:1px;background:#a0a0a0"></div><div style="left:317px;top:575px;width:145px;height:20px;background:#e3e3e3;border:1px solid #a0a0a0;border-top:none"></div><div style="left:313px;top:577px;width:4px;height:19px;background:#ffffff"></div><div class="t" style="left:321.5px;top:580.69px;font-size:11px;line-height:11px;color:#000;letter-spacing:-0.799px;">EXECUTE_TIMER_DIAGRAM</div><div style="left:313px;top:602px;width:803px;height:3px;background:#ffffff"></div><div style="left:316px;top:605px;width:796px;height:141px;background:#fff;border:1px solid #848992"></div><div style="left:317px;top:605px;width:795px;height:17px;background:#bfcddb;border-bottom:1px solid #848992"></div><svg style="position:absolute;left:317px;top:605px" width="15" height="16" viewBox="0 0 15 16"><g transform="translate(7 7.2)"><path d="M-2 -4.3 H2 L4.3 -2 V2 L2 4.3 H-2 L-4.3 2 V-2 Z" fill="#a8a8a8" stroke="#000" stroke-width="1"/><rect x="-1" y="-5.3" width="2" height="1.6" fill="#000"/><rect x="-1" y="3.7" width="2" height="1.6" fill="#000"/><rect x="-5.3" y="-1" width="1.6" height="2" fill="#000"/><rect x="3.7" y="-1" width="1.6" height="2" fill="#000"/><rect x="-1" y="-1" width="2" height="2" fill="#000"/><rect x="-3" y="-3" width="1.5" height="1.5" fill="#fff"/></g><path d="M0 2.5 L3 0 L3 5 Z" fill="#e01010"/><path d="M14 2.5 L11 0 L11 5 Z" fill="#10d010"/><rect x="1" y="12" width="3" height="3" fill="#f0d000"/><rect x="6" y="12" width="3" height="3" fill="#f0d000"/></svg><div class="t" style="left:336px;top:606.84px;font-size:12px;line-height:12px;color:#000;font-weight:bold;letter-spacing:0.189px;">Watches (2023-09-13 17:38:09 [https://acme.saas.pas-cloud.com:/pas-doc/bridge/admin/trace/TimerExample])</div><div style="left:1113px;top:605px;width:1.6px;height:143px;background:#777"></div><div style="left:317px;top:747px;width:797px;height:1.6px;background:#777"></div><div style="left:0px;top:755px;width:1118px;height:23px;background:#f0f0f0;border-top:1px solid #a0a0a0;box-sizing:border-box"></div><div class="t" style="left:5px;top:761.69px;font-size:11px;line-height:11px;color:#000;letter-spacing:-0.294px;">Done. 127 ms</div><div style="left:753px;top:756px;width:1px;height:22px;background:#a8a8a8"></div><div style="left:756px;top:756px;width:1px;height:22px;background:#a8a8a8"></div><div style="left:754px;top:755px;width:2px;height:1px;background:#f0f0f0"></div><div style="left:955px;top:756px;width:1px;height:22px;background:#a8a8a8"></div><div style="left:958px;top:756px;width:1px;height:22px;background:#a8a8a8"></div><div style="left:956px;top:755px;width:2px;height:1px;background:#f0f0f0"></div><div style="left:1019px;top:756px;width:1px;height:22px;background:#a8a8a8"></div><div style="left:1022px;top:756px;width:1px;height:22px;background:#a8a8a8"></div><div style="left:1020px;top:755px;width:2px;height:1px;background:#f0f0f0"></div><div class="t" style="left:1027.5px;top:761.69px;font-size:11px;line-height:11px;color:#000;letter-spacing:0.016px;">13.09.2023 15:47</div>
<svg style="position:absolute;left:0;top:0" width="1118" height="778" viewBox="0 0 1118 778">
<ellipse cx="89.5" cy="734" rx="60.5" ry="17.2" fill="none" stroke="#ef7f12" stroke-width="3.6"/>
<path d="M70 717 C71.06 663.7 67.3 625.06 116 590" fill="none" stroke="#ef7f12" stroke-width="4.2"/>
<path d="M137 577.5 L105.8 584.4 L113.5 591.5 L118 603 Z" fill="#ef7f12"/>
<path d="M234 576.2 C390 572 578 544 663 397" fill="none" stroke="#ef7f12" stroke-width="4.4"/>
<path d="M672.6 379 L648.2 400.5 L658.5 403 L667.5 410.8 Z" fill="#ef7f12"/>
</svg>
</body></html>
